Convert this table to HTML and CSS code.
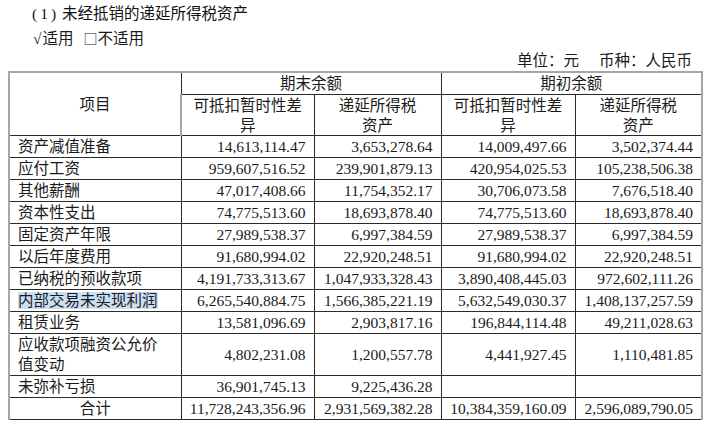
FILE: index.html
```html
<!DOCTYPE html>
<html lang="zh">
<head>
<meta charset="utf-8">
<link rel="stylesheet" href="styles.css">
</head>
<body>
<div class="page">
  <div class="title"><span class="num">(1)</span>未经抵销的递延所得税资产</div>
  <div class="choice"><span class="check">√</span>适用<span class="box">□</span>不适用</div>
  <div class="unit">单位：元<span class="gap"></span>币种：人民币</div>
  <table class="grid">
    <colgroup>
      <col class="c1"><col class="c2"><col class="c3"><col class="c4"><col class="c5">
    </colgroup>
    <thead>
      <tr class="h1">
        <th rowspan="2">项目</th>
        <th colspan="2">期末余额</th>
        <th colspan="2">期初余额</th>
      </tr>
      <tr class="h2">
        <th>可抵扣暂时性差<br>异</th>
        <th>递延所得税<br>资产</th>
        <th>可抵扣暂时性差<br>异</th>
        <th>递延所得税<br>资产</th>
      </tr>
    </thead>
    <tbody>
      <tr><td>资产减值准备</td><td class="n">14,613,114.47</td><td class="n">3,653,278.64</td><td class="n">14,009,497.66</td><td class="n">3,502,374.44</td></tr>
      <tr><td>应付工资</td><td class="n">959,607,516.52</td><td class="n">239,901,879.13</td><td class="n">420,954,025.53</td><td class="n">105,238,506.38</td></tr>
      <tr><td>其他薪酬</td><td class="n">47,017,408.66</td><td class="n">11,754,352.17</td><td class="n">30,706,073.58</td><td class="n">7,676,518.40</td></tr>
      <tr><td>资本性支出</td><td class="n">74,775,513.60</td><td class="n">18,693,878.40</td><td class="n">74,775,513.60</td><td class="n">18,693,878.40</td></tr>
      <tr><td>固定资产年限</td><td class="n">27,989,538.37</td><td class="n">6,997,384.59</td><td class="n">27,989,538.37</td><td class="n">6,997,384.59</td></tr>
      <tr><td>以后年度费用</td><td class="n">91,680,994.02</td><td class="n">22,920,248.51</td><td class="n">91,680,994.02</td><td class="n">22,920,248.51</td></tr>
      <tr><td>已纳税的预收款项</td><td class="n">4,191,733,313.67</td><td class="n">1,047,933,328.43</td><td class="n">3,890,408,445.03</td><td class="n">972,602,111.26</td></tr>
      <tr><td><span class="sel">内部交易未实现利润</span></td><td class="n">6,265,540,884.75</td><td class="n">1,566,385,221.19</td><td class="n">5,632,549,030.37</td><td class="n">1,408,137,257.59</td></tr>
      <tr><td>租赁业务</td><td class="n">13,581,096.69</td><td class="n">2,903,817.16</td><td class="n">196,844,114.48</td><td class="n">49,211,028.63</td></tr>
      <tr><td>应收款项融资公允价<br>值变动</td><td class="n">4,802,231.08</td><td class="n">1,200,557.78</td><td class="n">4,441,927.45</td><td class="n">1,110,481.85</td></tr>
      <tr><td>未弥补亏损</td><td class="n">36,901,745.13</td><td class="n">9,225,436.28</td><td class="n"></td><td class="n"></td></tr>
      <tr class="total"><td class="ctr">合计</td><td class="n">11,728,243,356.96</td><td class="n">2,931,569,382.28</td><td class="n">10,384,359,160.09</td><td class="n">2,596,089,790.05</td></tr>
    </tbody>
  </table>
</div>
</body>
</html>
```

FILE: styles.css
```css
html, body {
  margin: 0;
  padding: 0;
  background: #ffffff;
}

body {
  font-family: "Liberation Serif", "Noto Sans CJK SC", serif;
  color: #1a1a1a;
  font-size: 15.5px;
}

.page {
  width: 715px;
  height: 426px;
  overflow: hidden;
}

.title {
  padding-left: 32px;
  padding-top: 3px;
  line-height: 22px;
  color: #111;
}

.num {
  letter-spacing: 3px;
  margin-right: 3px;
}

.choice {
  padding-left: 33px;
  padding-top: 2px;
  line-height: 22px;
}

.check {
  margin-right: 1px;
}

.box {
  font-family: "Noto Sans CJK SC", sans-serif;
  font-size: 14px;
  margin-left: 10px;
  margin-right: 0;
}

.unit {
  text-align: right;
  padding-right: 23px;
  padding-top: 1px;
  line-height: 20px;
  height: 20px;
}

.gap {
  display: inline-block;
  width: 20px;
}

.grid {
  margin-left: 8px;
  width: 693px;
  table-layout: fixed;
  border-collapse: collapse;
  border-top: 2px solid #a6a6a6;
  border-left: 2px solid #a6a6a6;
  border-right: 2px solid #a6a6a6;
  border-bottom: 1px solid #222;
}

.c1 { width: 172px; }
.c2 { width: 133px; }
.c3 { width: 127px; }
.c4 { width: 134px; }
.c5 { width: 127px; }

.grid th,
.grid td {
  border: 1px solid #2a2a2a;
  padding: 1px 8px 0;
  line-height: 20px;
  font-weight: normal;
  white-space: nowrap;
}

.grid th {
  text-align: center;
}

.grid tr.h1 th {
  border-top: 2px solid #a6a6a6;
}

.grid tr.h2 th {
  line-height: 19.5px;
  padding-top: 1px;
  padding-bottom: 0;
}

.grid th:first-child,
.grid td:first-child {
  border-left: 2px solid #a6a6a6;
}

.grid th:last-child,
.grid td:last-child {
  border-right: 2px solid #a6a6a6;
}

.grid td {
  text-align: left;
}

.grid td.n {
  text-align: right;
}

.grid td.ctr {
  text-align: center;
}

.sel {
  background: #c9dff4;
}
```
